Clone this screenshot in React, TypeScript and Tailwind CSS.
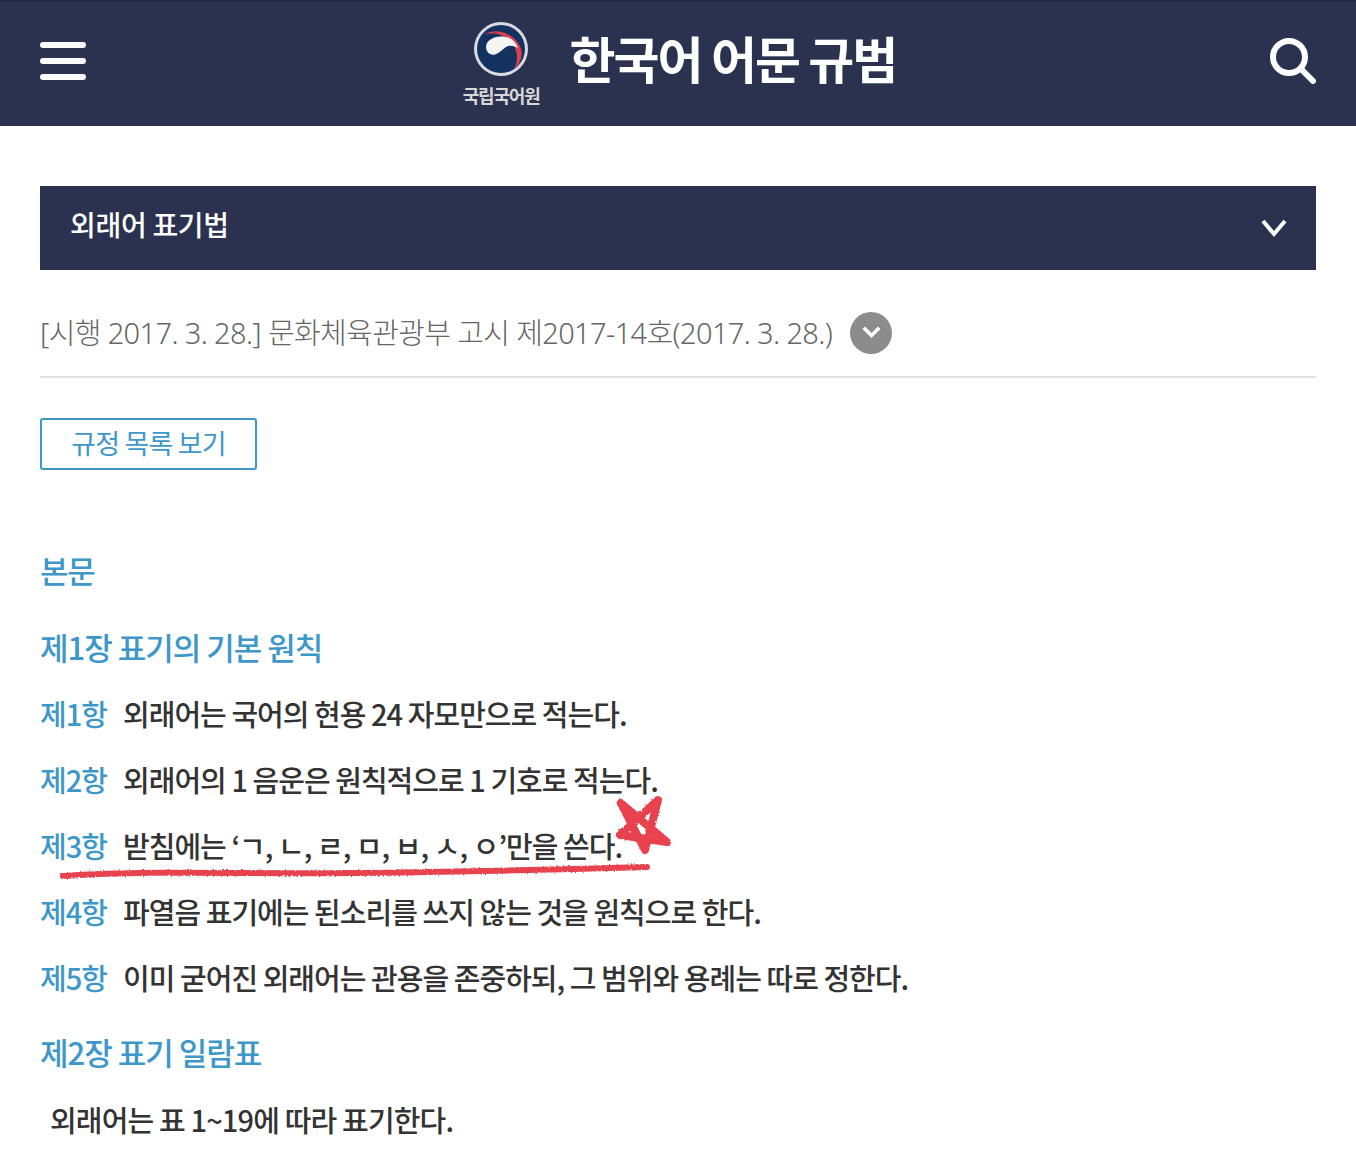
const FONT = "font-['Noto_Sans_CJK_KR','Noto_Sans',sans-serif]";

const rules = [
  { no: "제1항", text: "외래어는 국어의 현용 24 자모만으로 적는다." },
  { no: "제2항", text: "외래어의 1 음운은 원칙적으로 1 기호로 적는다." },
  { no: "제3항", text: "받침에는 ‘ㄱ, ㄴ, ㄹ, ㅁ, ㅂ, ㅅ, ㅇ’만을 쓴다." },
  { no: "제4항", text: "파열음 표기에는 된소리를 쓰지 않는 것을 원칙으로 한다." },
  { no: "제5항", text: "이미 굳어진 외래어는 관용을 존중하되, 그 범위와 용례는 따로 정한다." },
];

function Logo() {
  return (
    <svg width="58" height="58" viewBox="0 0 58 58">
      <circle cx="29" cy="29" r="27" fill="#d9dbe0" />
      <circle cx="29" cy="29" r="24" fill="#14325f" />
      <path d="M13.7 14.7A24 24 0 0 1 42 49.2C48 44 51 36 49 29C46 20 38 14 30 13C24 12 18 13 13.7 14.7z" fill="#e2404e" />
      <path d="M12 14.5A24 24 0 0 1 45 47C50 38 50 28 44 21C37 13 24 10 12 14.5z" fill="#e2404e" />
      <path d="M14 27C14 21 21 16.5 29 16.5C37 16.5 43 20 46 28C42 26 38 25 35 26.5C31 28.5 28 33 23 34.5C18 35.5 14 32 14 27z" fill="#f4f4f4" />
    </svg>
  );
}

function Search() {
  return (
    <svg width="46" height="46" viewBox="0 0 46 46" fill="none" stroke="#fff" strokeLinecap="round">
      <circle cx="19" cy="19" r="16" strokeWidth="6" />
      <path d="M31 31l12 12" strokeWidth="6" />
    </svg>
  );
}

function Chevron({ w, h, stroke }: { w: number; h: number; stroke: number }) {
  return (
    <svg width={w} height={h} viewBox={`0 0 ${w} ${h}`} fill="none" stroke="#fff" strokeWidth={stroke}>
      <path d={`M${stroke / 2} ${stroke / 2}L${w / 2} ${h - stroke}L${w - stroke / 2} ${stroke / 2}`} />
    </svg>
  );
}

function Scribble() {
  return (
    <svg className="absolute left-[55px] top-[795px]" width="620" height="90" viewBox="0 0 620 90" fill="none" stroke="#e8434f" strokeLinecap="round" strokeLinejoin="round">
      <filter id="crayon">
        <feTurbulence type="fractalNoise" baseFrequency="0.5" numOctaves="2" />
        <feDisplacementMap in="SourceGraphic" scale="3" />
      </filter>
      <g filter="url(#crayon)">
        <path d="M8 81c90-6 180-2 290-3s190-3 294-6" strokeWidth="6" />
        <path d="M565.7 8L590 55L603 5L565 40L612 47z" strokeWidth="8" />
      </g>
    </svg>
  );
}

export default function App() {
  return (
    <div className={`relative h-[1154px] overflow-hidden bg-white ${FONT}`}>
      <header className="flex h-[126px] items-center justify-between border-t border-[#1f2640] bg-[#2a324f] px-10 pb-[6px]">
        <div className="flex w-[46px] flex-col gap-[10px]">
          <span className="h-[6px] rounded-full bg-white" />
          <span className="h-[6px] rounded-full bg-white" />
          <span className="h-[6px] rounded-full bg-white" />
        </div>
        <div className="flex items-center gap-[30px] pl-[3px]">
          <div className="flex flex-col items-center pt-[5px]">
            <Logo />
            <span className="mt-[6px] text-[18px] leading-[22px] font-bold tracking-[-1.2px] text-[#d8d8d8]">국립국어원</span>
          </div>
          <span className="pb-[8px] text-[50px] leading-none font-bold tracking-[-2px] text-white">한국어 어문 규범</span>
        </div>
        <Search />
      </header>

      <main className="px-10 pt-[60px]">
        <div className="flex h-[84px] items-center justify-between bg-[#2a324f] pr-[29px] pl-[30px] text-white">
          <span className="pb-[8px] text-[28px] font-medium tracking-[-0.3px]">외래어 표기법</span>
          <Chevron w={26} h={19} stroke={4} />
        </div>

        <div className="flex h-[108px] items-center gap-[18px] border-b-2 border-[#e2e2e2] pt-[19px] text-[29px] font-light text-[#666]">
          <span className="font-['Noto_Sans','Noto_Sans_CJK_KR',sans-serif] tracking-[-0.63px]">[시행 2017. 3. 28.] 문화체육관광부 고시 제2017-14호(2017. 3. 28.)</span>
          <span className="flex h-[42px] w-[42px] items-center justify-center rounded-full bg-[#8c8c8c]">
            <Chevron w={19} h={13} stroke={3.5} />
          </span>
        </div>

        <button className="mt-10 h-[52px] w-[217px] rounded-[3px] border-2 border-[#3d97c9] pb-[2px] text-[27px] tracking-[-0.8px] text-[#3d97c9]">
          규정 목록 보기
        </button>

        <h2 className="mt-[76px] text-[31px] leading-[48px] font-medium tracking-[-1.2px] text-[#3d97c9]">본문</h2>
        <h3 className="mt-[29px] text-[31px] leading-[48px] font-medium tracking-[-1px] text-[#3d97c9]">제1장 표기의 기본 원칙</h3>

        <ul className="mt-[22px] flex flex-col gap-[26px] text-[29px] leading-10 font-medium tracking-[-0.97px] text-[#333]">
          {rules.map((rule) => (
            <li key={rule.no} className="flex gap-[16px]">
              <span className="text-[#3d97c9]">{rule.no}</span>
              <span>{rule.text}</span>
            </li>
          ))}
        </ul>

        <h3 className="mt-[31px] text-[31px] leading-[48px] font-medium tracking-[-1px] text-[#3d97c9]">제2장 표기 일람표</h3>
        <p className="mt-[23px] pl-[10px] text-[29px] leading-10 font-medium tracking-[-0.85px] text-[#333]">외래어는 표 1~19에 따라 표기한다.</p>
      </main>

      <Scribble />
    </div>
  );
}
